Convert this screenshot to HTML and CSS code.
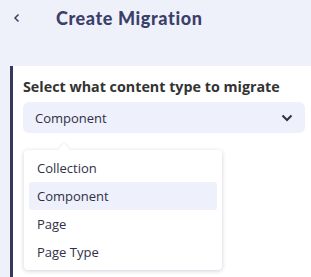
FILE: index.html
```html
<!DOCTYPE html>
<html lang="en">
<head>
    <meta charset="UTF-8">
    <title>Create Migration</title>
    <link rel="stylesheet" href="styles.css">
</head>
<body>
    <div class="header">
        <span class="back">
            <svg width="8" height="10" viewBox="0 0 8 10"><path d="M5.5 1.5 L2 5 L5.5 8.5" fill="none" stroke="#3d3f63" stroke-width="1.5"/></svg>
        </span>
        <h1 class="title">Create Migration</h1>
    </div>

    <div class="panel">
        <p class="label">Select what content type to migrate</p>
        <div class="select">
            <span>Component</span>
            <svg width="12" height="8" viewBox="0 0 12 8"><path d="M1.5 1.5 L6 6 L10.5 1.5" fill="none" stroke="#2f3147" stroke-width="2"/></svg>
        </div>

        <div class="menu">
            <div class="option">Collection</div>
            <div class="option active">Component</div>
            <div class="option">Page</div>
            <div class="option">Page Type</div>
        </div>
    </div>
</body>
</html>
```

FILE: styles.css
```css
body {
    margin: 0;
    background: #eff1fa;
    font-family: "Open Sans", "Lato", sans-serif;
    color: #2f3147;
    height: 277px;
    overflow: hidden;
}

.header {
    display: flex;
    align-items: center;
    height: 36px;
    padding-left: 13px;
}

.back {
    display: flex;
    width: 43px;
}

.title {
    margin: 0;
    font-family: "Lato", sans-serif;
    font-size: 18px;
    font-weight: 900;
    letter-spacing: 0.6px;
    color: #3d3f6b;
}

.panel {
    margin: 30px 0 0 10px;
    background: #fff;
    border-left: 3px solid #343a5e;
    padding: 11px 6px 0 10px;
    height: 200px;
}

.label {
    margin: 0 0 6px;
    font-size: 14.3px;
    line-height: 19px;
    font-weight: 700;
    color: #333;
}

.select {
    display: flex;
    align-items: center;
    justify-content: space-between;
    height: 31px;
    padding: 0 12px;
    background: #eef0fb;
    border-radius: 6px;
    font-size: 13px;
}

.menu {
    position: relative;
    width: 198px;
    margin: 17px 0 0 1px;
    padding: 4px 5px;
    box-sizing: border-box;
    background: #fff;
    border-radius: 4px;
    box-shadow: 0 1px 4px rgba(40, 40, 90, 0.22);
}

.menu::before {
    content: "";
    position: absolute;
    top: -5px;
    left: 36px;
    width: 8px;
    height: 8px;
    background: #fff;
    transform: rotate(45deg);
    box-shadow: -1px -1px 2px rgba(40, 40, 90, 0.08);
}

.option {
    height: 28px;
    line-height: 28px;
    padding: 0 8px;
    font-size: 13px;
    border-radius: 3px;
    position: relative;
}

.option.active {
    background: #eef0fb;
}
```
